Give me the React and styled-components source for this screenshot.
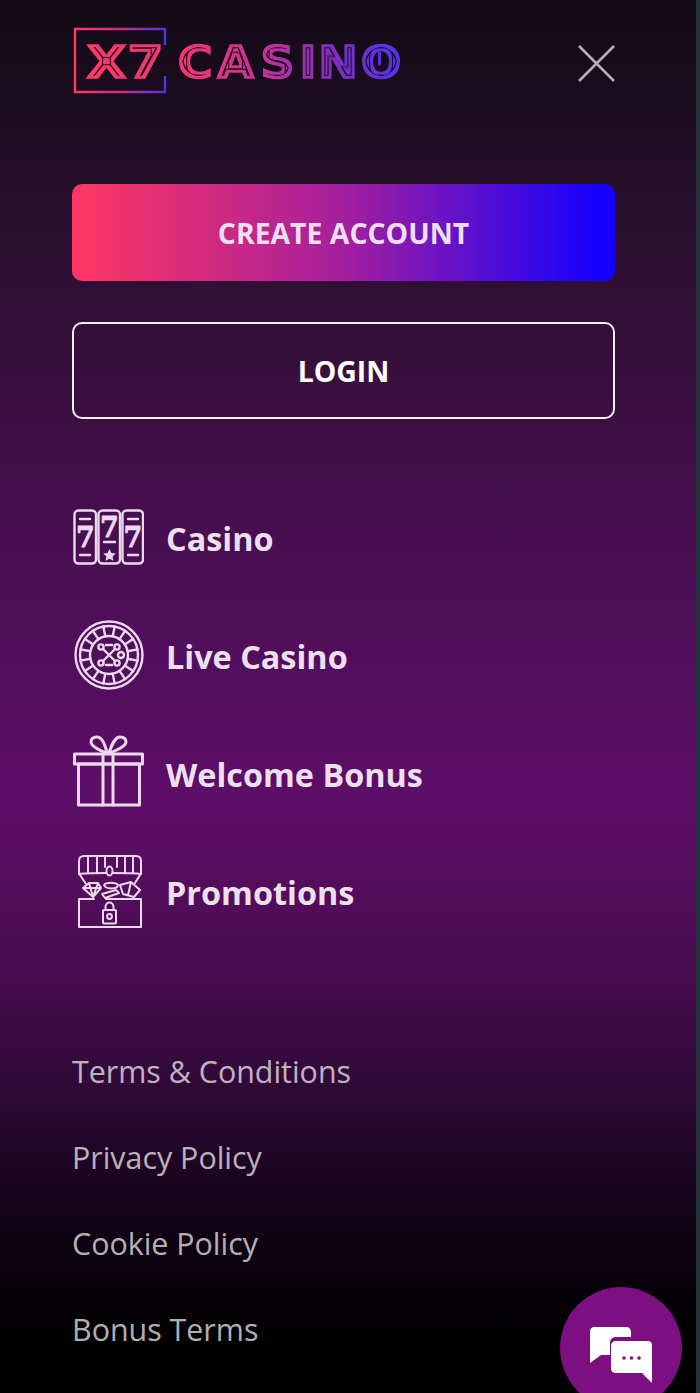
import styled, { createGlobalStyle } from "styled-components"

const GlobalStyle = createGlobalStyle`
    html, body {
        margin: 0;
        padding: 0;
        background: #22333a;
    }
    * {
        box-sizing: border-box;
    }
`

const Page = styled.div`
    position: relative;
    display: flex;
    width: 700px;
    height: 1393px;
    overflow: hidden;
    font-family: "Open Sans", "Liberation Sans", sans-serif;
`

const Panel = styled.div`
    flex: 1;
    padding: 28px 81px 0 72px;
    background: linear-gradient(
        180deg,
        #120b15 0,
        #1c0c20 110px,
        #2b0f30 230px,
        #3a0f40 400px,
        #4a0e54 560px,
        #5e0e68 805px,
        #4a0c52 960px,
        #2f0936 1090px,
        #17041c 1190px,
        #060108 1290px,
        #000 1350px
    );
`

const SideStrip = styled.div`
    width: 4px;
    background: #22333a;
`

const Header = styled.header`
    display: flex;
    justify-content: space-between;
    align-items: center;
    height: 67px;
    margin-bottom: 89px;
`

const Logo = styled.svg`
    display: block;
    width: 330px;
    height: 70px;
`

const LogoText = styled.text`
    font-family: "DejaVu Sans", "Liberation Sans", sans-serif;
    font-weight: 700;
    font-size: 44px;
    stroke-width: 1.4;
    stroke-linejoin: miter;
`

const CloseButton = styled.button`
    display: flex;
    padding: 0;
    margin-top: 3px;
    border: none;
    background: none;
    color: #b4aeb6;
`

const Buttons = styled.div`
    display: flex;
    flex-direction: column;
    gap: 41px;
`

const ActionButton = styled.button`
    height: 97px;
    border-radius: 10px;
    border: ${(p) => (p.$outline ? "2px solid #f4eef5" : "none")};
    background: ${(p) =>
        p.$outline
            ? "transparent"
            : "linear-gradient(90deg, #fb3565 3%, #a41f9e 50%, #1500ff 97%)"};
    color: ${(p) => (p.$outline ? "#fff" : "#eddff0")};
    font-family: inherit;
    font-size: 28.4px;
    font-weight: 700;
`

const Menu = styled.nav`
    display: flex;
    flex-direction: column;
    margin-top: 60px;
`

const MenuRow = styled.a`
    display: flex;
    align-items: center;
    gap: 22px;
    height: 118px;
    color: #ecdfee;
    font-size: 32.4px;
    font-weight: 700;
`

const MenuIcon = styled.svg`
    flex: none;
    width: 72px;
    height: 80px;
    fill: none;
    stroke: #ecd9ee;
    stroke-width: ${(p) => p.$weight || 2.4};
    stroke-linecap: round;
    stroke-linejoin: round;
`

const SevenGlyph = styled.text`
    font-family: "DejaVu Serif", serif;
    font-weight: 700;
    font-size: 27px;
    fill: #ecd9ee;
    stroke: #ecd9ee;
    stroke-width: 0.8;
    text-anchor: middle;
`

const FooterLinks = styled.div`
    display: flex;
    flex-direction: column;
    margin-top: 77px;
`

const FooterLink = styled.a`
    display: flex;
    align-items: center;
    height: 86px;
    color: rgba(255, 255, 255, 0.7);
    font-size: 30.4px;
`

const ChatBubble = styled.button`
    position: absolute;
    left: 560px;
    top: 1287px;
    width: 122px;
    height: 122px;
    padding: 0;
    border: none;
    border-radius: 50%;
    background: #7c0f82;
`

const CASINO_X = "177.6 213.5 252.5 288 305 344"

const Brand = () => (
    <Logo viewBox="72 28 330 70">
        <defs>
            <linearGradient id="boxGrad" x1="75" x2="166" y1="0" y2="0" gradientUnits="userSpaceOnUse">
                <stop offset="0" stopColor="#ff3a68" />
                <stop offset="0.55" stopColor="#c02f86" />
                <stop offset="1" stopColor="#4a34e8" />
            </linearGradient>
            <linearGradient id="x7Grad" x1="0" x2="1" y1="0" y2="0">
                <stop offset="0" stopColor="#ff3a68" />
                <stop offset="1" stopColor="#f2386e" />
            </linearGradient>
            <linearGradient id="wordGrad" x1="0" x2="1" y1="0" y2="0">
                <stop offset="0" stopColor="#f5376e" />
                <stop offset="0.4" stopColor="#c0339a" />
                <stop offset="0.7" stopColor="#7d2fc4" />
                <stop offset="1" stopColor="#5233ea" />
            </linearGradient>
            <filter id="inline" x="-5%" y="-5%" width="110%" height="110%">
                <feMorphology in="SourceAlpha" operator="erode" radius="3" result="outer" />
                <feMorphology in="SourceAlpha" operator="erode" radius="4" result="inner" />
                <feComposite in="outer" in2="inner" operator="out" result="ring" />
                <feComposite in="SourceGraphic" in2="ring" operator="out" />
            </filter>
        </defs>
        <path
            d="M165 46V30H75V93H165V77"
            fill="none"
            stroke="url(#boxGrad)"
            strokeWidth="2.4"
        />
        <LogoText
            x="86"
            y="79"
            textLength="78"
            lengthAdjust="spacingAndGlyphs"
            fill="url(#x7Grad)"
            stroke="url(#x7Grad)"
            filter="url(#inline)"
        >
            X7
        </LogoText>
        <LogoText
            x={CASINO_X}
            y="79"
            transform="translate(178 0) scale(1.1 1) translate(-178 0)"
            fill="url(#wordGrad)"
            stroke="url(#wordGrad)"
            filter="url(#inline)"
        >
            CASINO
        </LogoText>
        <path d="M379.500 54V65" stroke="#5233ea" strokeWidth="3" strokeLinecap="round" />
    </Logo>
)

const SlotsIcon = () => (
    <MenuIcon viewBox="0 0 72 80">
        <rect x="2.500" y="12.500" width="21.500" height="53" rx="4" />
        <rect x="26.500" y="12.500" width="21.500" height="53" rx="4" />
        <rect x="50.500" y="12.500" width="20.500" height="53" rx="4" />
        <path d="M8 21H18M8 57H18M32 44H43M56 21H66M56 57H66" />
        <SevenGlyph x="13.500" y="49">7</SevenGlyph>
        <SevenGlyph x="37.500" y="39">7</SevenGlyph>
        <SevenGlyph x="61" y="49">7</SevenGlyph>
        <polygon
            points="37.5,51 39.4,55 43.8,55.500 40.600,58.500 41.400,62.800 37.500,60.700 33.600,62.800 34.400,58.500 31.200,55.500 35.600,55"
            fill="#ecd9ee"
            stroke="none"
        />
    </MenuIcon>
)

const spokes = Array.from({ length: 16 }, (_, i) => {
    const a = (i * Math.PI) / 8 + Math.PI / 16
    return {
        x1: 37 + 19 * Math.cos(a),
        y1: 39 + 19 * Math.sin(a),
        x2: 37 + 29 * Math.cos(a),
        y2: 39 + 29 * Math.sin(a),
    }
})

const RouletteIcon = () => (
    <MenuIcon viewBox="0 0 72 80">
        <circle cx="37" cy="39" r="33.500" />
        <circle cx="37" cy="39" r="29" />
        <circle cx="37" cy="39" r="19" />
        {spokes.map((s, i) => (
            <line key={i} {...s} />
        ))}
        <path d="M31 33L43 45M43 33L31 45M34 29H40M34 49H40" />
        <circle cx="29" cy="31" r="2.600" />
        <circle cx="45" cy="31" r="2.600" />
        <circle cx="29" cy="47" r="2.600" />
        <circle cx="45" cy="47" r="2.600" />
        <circle cx="49" cy="39" r="3" />
    </MenuIcon>
)

const GiftIcon = () => (
    <MenuIcon viewBox="0 0 72 80" $weight={3}>
        <rect x="2.500" y="20" width="68" height="10" />
        <rect x="6.500" y="30" width="61" height="41" />
        <path d="M31 20V71M41 20V71" />
        <path d="M35 19C28 17 19 12 19 8C19 4 22 3 25 3C30 3 33 10 35 19Z" />
        <path d="M37 19C44 17 54 12 54 8C54 4 51 3 48 3C43 3 40 10 37 19Z" />
    </MenuIcon>
)

const ChestIcon = () => (
    <MenuIcon viewBox="0 0 72 80" $weight={2}>
        {/* lid */}
        <path d="M7 22V9C7 6 9 4 12 4H64C67 4 69 6 69 9V22" />
        <path d="M7 22C12 21 18 21 34 21M41 21C54 21 62 21 69 22" />
        <path d="M16 4V21M25 4V21M33 4V15M45 4V15M53 4V21M61 4V21" />
        <ellipse cx="37.500" cy="19" rx="3" ry="4.500" />
        <path d="M8 23L14 32M68 23L63 31" />
        {/* gems and coins */}
        <path d="M11 36L17 31H26L29 36L21 45ZM11 36H29M17 31L21 45M26 31L21 45" />
        <path d="M32 33C34 30 44 30 46 33C46 37 34 38 32 33Z" />
        <path d="M30 42L44 38L47 41L33 46Z" />
        <path d="M48 33L59 30L68 38L62 45L51 42ZM59 30L56 43" />
        {/* base */}
        <path d="M7 47H22M34 47H69M7 47V75H69V47" />
        <rect x="31" y="58" width="13" height="13.500" rx="1" />
        <path d="M33.500 58V55C33.500 49 41.500 49 41.500 55V58" />
        <circle cx="37.500" cy="64.500" r="2.400" />
    </MenuIcon>
)

const ChatIcon = () => (
    <svg width="122" height="122" viewBox="0 0 122 122">
        <path
            d="M34 40H66C69 40 71 42 71 45V50H56C52.500 50 50 52.500 50 56V68H41L30 76V44C30 42 32 40 34 40Z"
            fill="#fff"
        />
        <path
            d="M56 54H88C90.500 54 92 55.500 92 58V96L82 86H56C53 86 51 84 51 81V59C51 56 53 54 56 54Z"
            fill="#fff"
        />
        <circle cx="64" cy="71" r="1.800" fill="#7c0f82" />
        <circle cx="71.500" cy="71" r="1.800" fill="#7c0f82" />
        <circle cx="79" cy="71" r="1.800" fill="#7c0f82" />
    </svg>
)

const menuItems = [
    { label: "Casino", Icon: SlotsIcon },
    { label: "Live Casino", Icon: RouletteIcon },
    { label: "Welcome Bonus", Icon: GiftIcon },
    { label: "Promotions", Icon: ChestIcon },
]

const footerItems = ["Terms & Conditions", "Privacy Policy", "Cookie Policy", "Bonus Terms"]

const App = () => {
    return (
        <Page>
            <GlobalStyle />
            <Panel>
                <Header>
                    <Brand />
                    <CloseButton>
                        <svg width="37" height="37" viewBox="0 0 37 37" fill="none" stroke="currentColor" strokeWidth="2.600">
                            <path d="M1 1L36 36M36 1L1 36" />
                        </svg>
                    </CloseButton>
                </Header>
                <Buttons>
                    <ActionButton>CREATE ACCOUNT</ActionButton>
                    <ActionButton $outline>LOGIN</ActionButton>
                </Buttons>
                <Menu>
                    {menuItems.map(({ label, Icon }) => (
                        <MenuRow key={label}>
                            <Icon />
                            {label}
                        </MenuRow>
                    ))}
                </Menu>
                <FooterLinks>
                    {footerItems.map((item) => (
                        <FooterLink key={item}>{item}</FooterLink>
                    ))}
                </FooterLinks>
            </Panel>
            <SideStrip />
            <ChatBubble>
                <ChatIcon />
            </ChatBubble>
        </Page>
    )
}

export default App
